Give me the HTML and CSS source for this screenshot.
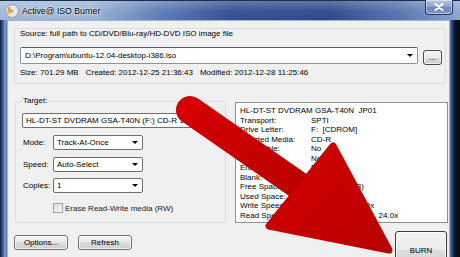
FILE: index.html
```html
<!DOCTYPE html>
<html lang="en">
<head>
  <meta charset="UTF-8">
  <title>Active@ ISO Burner</title>
  <link rel="stylesheet" href="styles.css">
</head>
<body>
  <div class="window">
    <div class="titlebar">
      <svg class="app-icon" width="14" height="14" viewBox="0 0 14 14">
        <circle cx="7" cy="7" r="6.5" fill="#e4e6ea" stroke="#8a8f99" stroke-width="0.8"/>
        <circle cx="7" cy="7" r="1.6" fill="#9aa3b0"/>
        <path d="M2 9 C3 6 2.5 4 4.5 2 C4.5 4.5 6.5 5 6 8 C5.5 10 3 10.5 2 9 Z" fill="#f08a1c"/>
        <path d="M3.2 9 C3.6 7.5 3.6 6.5 4.6 5.4 C4.8 7 5.6 7.6 5 8.8 C4.6 9.5 3.6 9.6 3.2 9 Z" fill="#ffd84a"/>
      </svg>
      <span class="title">Active@ ISO Burner</span>
      <div class="close-btn">
        <svg width="10" height="8" viewBox="0 0 10 8">
          <path d="M1.5 1 L8.5 7 M8.5 1 L1.5 7" stroke="#fff" stroke-width="2" stroke-linecap="round"/>
        </svg>
      </div>
    </div>

    <div class="client">
      <div class="source">
        <div class="source-label">Source: full path to CD/DVD/Blu-ray/HD-DVD ISO image file</div>
        <div class="source-row">
          <div class="combo combo-source">
            <span class="combo-text">D:\Program\ubuntu-12.04-desktop-i386.iso</span>
            <span class="caret"></span>
          </div>
          <button class="btn btn-browse">...</button>
        </div>
        <div class="file-info">
          <span>Size: 701.29 MB</span>
          <span>Created: 2012-12-25 21:36:43</span>
          <span>Modified: 2012-12-28 11:25:46</span>
        </div>
      </div>

      <div class="middle">
        <fieldset class="target">
          <legend>Target:</legend>
          <div class="combo combo-drive">
            <span class="combo-text">HL-DT-ST DVDRAM GSA-T40N (F:) CD-R 1.67</span>
            <span class="caret"></span>
          </div>
          <div class="field">
            <label>Mode:</label>
            <div class="combo combo-small"><span class="combo-text">Track-At-Once</span><span class="caret"></span></div>
          </div>
          <div class="field">
            <label>Speed:</label>
            <div class="combo combo-small"><span class="combo-text">Auto-Select</span><span class="caret"></span></div>
          </div>
          <div class="field">
            <label>Copies:</label>
            <div class="combo combo-small"><span class="combo-text">1</span><span class="caret"></span></div>
          </div>
          <div class="check">
            <span class="check-box"></span>
            <span>Erase Read-Write media (RW)</span>
          </div>
        </fieldset>

        <div class="drive-info">
          <div class="info-line">HL-DT-ST DVDRAM GSA-T40N  JP01</div>
          <div class="info-line"><span class="key">Transport:</span><span>SPTI</span></div>
          <div class="info-line"><span class="key">Drive Letter:</span><span>F:  [CDROM]</span></div>
          <div class="info-line"><span class="key">Inserted Media:</span><span>CD-R</span></div>
          <div class="info-line"><span class="key">Rewritable:</span><span>No</span></div>
          <div class="info-line"><span class="key">Test Write:</span><span>No</span></div>
          <div class="info-line"><span class="key">Erasable:</span><span>No</span></div>
          <div class="info-line"><span class="key">Blank:</span><span>No</span></div>
          <div class="info-line"><span class="key">Free Space:</span><span>0 Bytes (0 MB)</span></div>
          <div class="info-line"><span class="key">Used Space:</span><span>0 Bytes (0 MB)</span></div>
          <div class="info-line"><span class="key">Write Speeds:</span><span>8.0x, 16.0x, 24.0x</span></div>
          <div class="info-line"><span class="key">Read Speeds:</span><span>8.0x, 10.0x, 16.0x, 24.0x</span></div>
        </div>
      </div>

      <div class="actions">
        <button class="btn btn-small">Options...</button>
        <button class="btn btn-small btn-refresh">Refresh</button>
        <button class="btn btn-burn">BURN</button>
      </div>
    </div>

    <!-- red pointer arrow drawn over the dialog -->
    <svg class="pointer" width="460" height="257" viewBox="0 0 460 257">
      <defs>
        <linearGradient id="redFill" x1="0" y1="0" x2="1" y2="1">
          <stop offset="0" stop-color="#d40000"/>
          <stop offset="1" stop-color="#b80000"/>
        </linearGradient>
      </defs>
      <line x1="190" y1="110" x2="305" y2="190" stroke="url(#redFill)" stroke-width="28" stroke-linecap="round"/>
      <path d="M333 146 L269 226 L389 250 Z" fill="url(#redFill)" stroke="url(#redFill)" stroke-width="7" stroke-linejoin="round"/>
    </svg>
  </div>
</body>
</html>
```

FILE: styles.css
```css
* {
  margin: 0;
  padding: 0;
  box-sizing: border-box;
}

body {
  width: 460px;
  height: 257px;
  overflow: hidden;
  background: #0b1630;
  font-family: "Liberation Sans", Arial, sans-serif;
  font-size: 8px;
  color: #000;
}

.window {
  position: relative;
  width: 460px;
  height: 257px;
  background: linear-gradient(to right, #0c1a36 0, #3b5d96 3px, #7f9dca 5px, #5b7bb1 7px, #5b7bb1 450px, #2c4778 452px, #0a1428 455px, #050a14 460px);
}

/* title bar */
.titlebar {
  display: flex;
  align-items: center;
  height: 20px;
  padding-left: 5px;
  background:
    linear-gradient(to bottom, rgba(255, 255, 255, 0.25) 0, rgba(255, 255, 255, 0.05) 50%, rgba(0, 0, 0, 0) 100%),
    linear-gradient(to right, #9fb8d9 0, #9ab4d7 90px, #5c7cb5 160px, #324f8f 230px, #2c4a8b 330px, #5674ad 400px, #8da6cf 460px);
  border-top: 1px solid #1d2d4c;
}

.app-icon {
  flex: none;
}

.title {
  margin-left: 3px;
  font-size: 8.7px;
  color: #000;
  text-shadow: 0 0 4px #fff, 0 0 2px #fff;
}

.close-btn {
  margin-left: auto;
  margin-right: 7px;
  align-self: flex-start;
  width: 28px;
  height: 15px;
  margin-top: -1px;
  display: flex;
  align-items: center;
  justify-content: center;
  border: 1px solid #24385e;
  border-top: none;
  border-radius: 0 0 4px 4px;
  background: linear-gradient(to bottom, #b5c5e0 0, #8ea5cc 45%, #6a85b8 55%, #7f99c8 100%);
  box-shadow: inset 0 0 0 1px rgba(255, 255, 255, 0.45);
}

/* client area */
.client {
  margin-left: 7px;
  width: 443px;
  height: 237px;
  padding: 7px 1px 0 6px;
  background: #f0f0f0;
  border: 1px solid #9fb1cc;
  border-bottom: none;
}

.source {
  width: 432px;
  height: 56px;
  padding: 0 0 0 5px;
  border: 1px solid #d5dfe5;
  border-radius: 3px;
}

.source-label {
  line-height: 10px;
}

.source-row {
  display: flex;
  align-items: flex-start;
  margin-top: 8px;
}

.combo {
  display: flex;
  align-items: center;
  height: 15px;
  padding: 0 4px 0 3px;
  background: #fff;
  border: 1px solid #6f6f6f;
  border-radius: 2px;
}

.combo-text {
  white-space: pre;
}

.caret {
  flex: none;
  margin-left: auto;
  width: 0;
  height: 0;
  border-left: 3px solid transparent;
  border-right: 3px solid transparent;
  border-top: 3px solid #000;
}

.combo-source {
  width: 398px;
  height: 17px;
  padding-left: 4px;
  border-color: #8d9199;
  border-top-color: #5b5e63;
}

.btn {
  font-family: inherit;
  font-size: 8px;
  color: #000;
  border: 1px solid #707070;
  border-radius: 3px;
  background: linear-gradient(to bottom, #f2f2f2 0, #ebebeb 50%, #dddddd 50%, #cfcfcf 100%);
  box-shadow: inset 0 0 0 1px rgba(255, 255, 255, 0.7);
}

.btn-browse {
  margin-left: 5px;
  margin-top: 3px;
  width: 19px;
  height: 15px;
  line-height: 10px;
  border-color: #4a4a4a;
}

.file-info {
  display: flex;
  gap: 7px;
  margin-top: 3px;
  line-height: 10px;
}

/* target + drive info */
.middle {
  display: flex;
  align-items: flex-start;
  margin-top: 12px;
}

.target {
  width: 211px;
  height: 127px;
  margin-left: 1px;
  padding: 7px 6px 8px;
  border: 1px solid #d5dfe5;
  border-radius: 3px;
}

.target legend {
  padding: 0 1px;
  line-height: 10px;
}

.combo-drive {
  width: 196px;
}

.field {
  display: flex;
  align-items: center;
  margin-top: 6.5px;
}

.combo-drive + .field {
  margin-top: 7px;
}

.field label {
  width: 31px;
  padding-left: 1px;
}

.combo-small {
  width: 90px;
}

.check {
  display: flex;
  align-items: center;
  gap: 2px;
  margin-top: 10px;
  margin-left: 31px;
  color: #222;
}

.check-box {
  width: 10px;
  height: 10px;
  border: 1px solid #a3a3a3;
  background: linear-gradient(to bottom right, #dcdcdc, #f8f8f8);
}

.drive-info {
  width: 213px;
  height: 121px;
  margin-left: 9px;
  margin-top: 6px;
  padding: 3px 4px;
  background: #fff;
  border: 1px solid #8e8f8f;
}

.info-line {
  display: flex;
  line-height: 9.5px;
  white-space: pre;
}

.key {
  width: 71px;
}

/* bottom buttons */
.actions {
  display: flex;
  align-items: flex-start;
}

.btn-small {
  margin-top: 12px;
  width: 54px;
  height: 15px;
}

.btn-refresh {
  margin-left: 10px;
}

.btn-burn {
  margin-left: auto;
  margin-right: 1px;
  margin-top: 8px;
  width: 52px;
  height: 38px;
  border-color: #3c3c3c;
}

.pointer {
  position: absolute;
  top: 0;
  left: 0;
  pointer-events: none;
}
```
